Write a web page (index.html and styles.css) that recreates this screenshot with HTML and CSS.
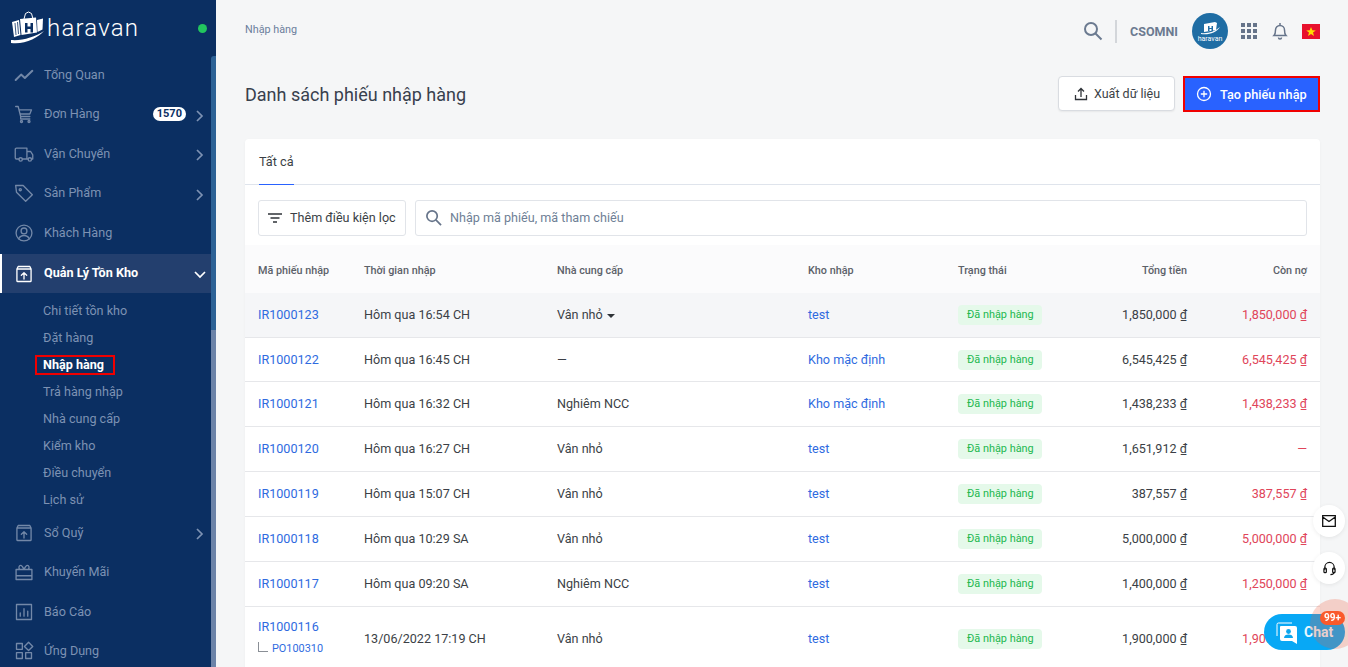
FILE: index.html
```html
<!DOCTYPE html>
<html lang="vi">
<head>
<meta charset="utf-8">
<title>Nhập hàng</title>
<link rel="stylesheet" href="styles.css">
</head>
<body>
<div class="app">
  <aside class="sidebar">
    <div class="brand">
      <svg class="brand-mark" viewBox="0 0 36 34" width="36" height="34">
        <path d="M14 8l1.500-5.500 3-1.500 3 1.500L23 8" fill="none" stroke="#fff" stroke-width="1"/>
        <path d="M2 11l7-2 1.500 15-6.500 2z" fill="#fff"/>
        <path d="M10 8l16-1.500 1 15-15.500 2.500z" fill="#fff"/>
        <path d="M27 9l6-1.500-.5 11-5 2.500z" fill="#fff"/>
        <path d="M15 12h2.500v3.500h3V12H23v9.500h-2.500v-3.500h-3v3.500H15z" fill="#0b2f62"/>
        <path d="M1 29c11 1 24-3 33-9-6 7-20 14-33 12z" fill="#fff"/>
        <path d="M5 12l1 12M7.500 11l1 12" stroke="#0b2f62" stroke-width=".8"/>
      </svg>
      <span class="brand-name">haravan</span>
      <span class="status-dot"></span>
    </div>
    <nav class="menu">
      <a class="menu-item"><svg class="mi" viewBox="0 0 24 24"><path class="thick" d="M2 18l6.500-6.500 4.500 4L22 7" /></svg><span class="ml">Tổng Quan</span></a>
      <a class="menu-item"><svg class="mi" viewBox="0 0 24 24"><path d="M2 3h3l3 12h11M7 7h14l-2 5H8M8 15v3h11"/><circle cx="9" cy="21" r="1.200"/><circle cx="18" cy="21" r="1.200"/></svg><span class="ml">Đơn Hàng</span><span class="count">1570</span><svg class="chev" viewBox="0 0 10 14"><path d="M2 2l5 5-5 5"/></svg></a>
      <a class="menu-item"><svg class="mi" viewBox="0 0 24 24"><path d="M6 18H3a1.500 1.500 0 0 1-1.500-1.500v-10A1.500 1.500 0 0 1 3 5h12.500v13H10M15.500 9H20l2.500 4v5H21M15.500 18H17"/><circle cx="8" cy="18.500" r="2"/><circle cx="19" cy="18.500" r="2"/></svg><span class="ml">Vận Chuyển</span><svg class="chev" viewBox="0 0 10 14"><path d="M2 2l5 5-5 5"/></svg></a>
      <a class="menu-item"><svg class="mi" viewBox="0 0 24 24"><path d="M2 3h9l11 11-8 8L3 11z"/><circle cx="7.500" cy="8" r="1.300"/></svg><span class="ml">Sản Phẩm</span><svg class="chev" viewBox="0 0 10 14"><path d="M2 2l5 5-5 5"/></svg></a>
      <a class="menu-item"><svg class="mi" viewBox="0 0 24 24"><circle cx="12" cy="12" r="9.500"/><circle cx="12" cy="9.500" r="3.500"/><path d="M5.500 19c1.500-3 4-4 6.500-4s5 1 6.500 4"/></svg><span class="ml">Khách Hàng</span></a>
      <a class="menu-item active"><svg class="mi" viewBox="0 0 24 24"><path d="M3.500 6V20a1 1 0 0 0 1 1h15a1 1 0 0 0 1-1V6M3.500 6l1.500-3h14l1.500 3zM12 18v-7M8.800 13.500L12 10.500l3.200 3"/></svg><span class="ml">Quản Lý Tồn Kho</span><svg class="chev open" viewBox="0 0 14 10"><path d="M2 2l5 5 5-5"/></svg></a>
      <div class="submenu">
        <a class="sub-item">Chi tiết tồn kho</a>
        <a class="sub-item">Đặt hàng</a>
        <a class="sub-item current"><span class="marked">Nhập hàng</span></a>
        <a class="sub-item">Trả hàng nhập</a>
        <a class="sub-item">Nhà cung cấp</a>
        <a class="sub-item">Kiểm kho</a>
        <a class="sub-item">Điều chuyển</a>
        <a class="sub-item">Lịch sử</a>
      </div>
      <a class="menu-item"><svg class="mi" viewBox="0 0 24 24"><path d="M3.500 6V20a1 1 0 0 0 1 1h15a1 1 0 0 0 1-1V6M3.500 6l1.500-3h14l1.500 3zM12 18v-7M8.800 13.500L12 10.500l3.200 3"/></svg><span class="ml">Sổ Quỹ</span><svg class="chev" viewBox="0 0 10 14"><path d="M2 2l5 5-5 5"/></svg></a>
      <a class="menu-item"><svg class="mi" viewBox="0 0 24 24"><path d="M2.500 9h19v12h-19zM2.500 16.500h19M7 9c-2-2-1-5 1-5s3 3 4 5c1-2 2-5 4-5s3 3 1 5"/></svg><span class="ml">Khuyến Mãi</span></a>
      <a class="menu-item"><svg class="mi" viewBox="0 0 24 24"><path d="M3 3h18v18H3zM7.500 17v-4M12 17V8M16.500 17v-6"/></svg><span class="ml">Báo Cáo</span></a>
      <a class="menu-item"><svg class="mi" viewBox="0 0 24 24"><path d="M3 3h7v7H3zM3 14h7v7H3zM14 14h7v7h-7zM17.500 1.500l5 5-5 5-5-5z"/></svg><span class="ml">Ứng Dụng</span></a>
    </nav>
    <div class="rail"><div class="rail-thumb"></div></div>
  </aside>

  <main class="main">
    <header class="topbar">
      <span class="crumb">Nhập hàng</span>
      <div class="top-actions">
        <svg class="top-search" viewBox="0 0 20 20" width="20" height="20"><circle cx="8" cy="8" r="6"/><path d="M12.500 12.500L18.500 18.500"/></svg>
        <span class="divider"></span>
        <span class="org">CSOMNI</span>
        <span class="avatar">
          <svg viewBox="0 0 36 36" width="36" height="36"><path d="M12 11l11-2 2 1-1 7-12 2z" fill="#fff"/><path d="M16 13h1.500v2h2v-2H21v5h-1.500v-2h-2v2H16z" fill="#1f6da4"/><path d="M9 20c6 1 13-1 19-6-4 6-11 8-19 7z" fill="#fff"/><text x="18" y="28" class="avatar-text">haravan</text></svg>
        </span>
        <svg class="apps" viewBox="0 0 16 16" width="16" height="16"><path d="M0 0h4v4H0zM6 0h4v4H6zM12 0h4v4h-4zM0 6h4v4H0zM6 6h4v4H6zM12 6h4v4h-4zM0 12h4v4H0zM6 12h4v4H6zM12 12h4v4h-4z"/></svg>
        <svg class="bell" viewBox="0 0 16 18" width="16" height="18"><path d="M2 13.500c1-1 1.500-2 1.500-5.500a4.500 4.500 0 0 1 9 0c0 3.500.5 4.500 1.500 5.500zM8 1v2M6.500 15.500a1.500 1.500 0 0 0 3 0"/></svg>
        <svg class="flag" viewBox="0 0 18 15" width="18" height="15"><path d="M0 0h18v15H0z" fill="#e8112d"/><path d="M9 3l1.300 3.300 3.500.1-2.800 2.100 1 3.400L9 9.900 6 11.900l1-3.400-2.800-2.100 3.500-.1z" fill="#ffde00"/></svg>
      </div>
    </header>

    <div class="page-head">
      <h1 class="page-title">Danh sách phiếu nhập hàng</h1>
      <div class="page-actions">
        <button class="btn"><svg class="btn-icon" viewBox="0 0 14 14" width="14" height="14"><path d="M1.500 8v4.500h11V8M7 10V2M4 4.500L7 1.500l3 3"/></svg>Xuất dữ liệu</button>
        <button class="btn-primary"><svg class="plus-icon" viewBox="0 0 16 16" width="16" height="16"><circle cx="8" cy="8" r="6.500"/><path d="M8 4.800v6.400M4.800 8h6.400"/></svg>Tạo phiếu nhập</button>
      </div>
    </div>

    <section class="card">
      <div class="tabs"><span class="tab">Tất cả</span></div>
      <div class="filters">
        <button class="filter-btn"><svg class="filter-icon" viewBox="0 0 14 10" width="14" height="10"><path d="M0 1h14M2.500 5h9M5 9h4"/></svg>Thêm điều kiện lọc</button>
        <label class="search"><svg class="search-icon" viewBox="0 0 18 18" width="17" height="17"><circle cx="7.500" cy="7.500" r="5.500"/><path d="M11.500 11.500L17 17"/></svg><span class="placeholder">Nhập mã phiếu, mã tham chiếu</span></label>
      </div>
      <table class="grid">
        <colgroup><col class="c1"><col class="c2"><col class="c3"><col class="c4"><col class="c5"><col class="c6"><col class="c7"></colgroup>
        <thead>
          <tr><th>Mã phiếu nhập</th><th>Thời gian nhập</th><th>Nhà cung cấp</th><th>Kho nhập</th><th>Trạng thái</th><th class="r">Tổng tiền</th><th class="r">Còn nợ</th></tr>
        </thead>
        <tbody>
          <tr class="hover"><td class="link">IR1000123</td><td>Hôm qua 16:54 CH</td><td>Vân nhỏ <span class="caret"></span></td><td class="link">test</td><td><span class="tag">Đã nhập hàng</span></td><td class="r">1,850,000 ₫</td><td class="r debt">1,850,000 ₫</td></tr>
          <tr class="short"><td class="link">IR1000122</td><td>Hôm qua 16:45 CH</td><td>—</td><td class="link">Kho mặc định</td><td><span class="tag">Đã nhập hàng</span></td><td class="r">6,545,425 ₫</td><td class="r debt">6,545,425 ₫</td></tr>
          <tr><td class="link">IR1000121</td><td>Hôm qua 16:32 CH</td><td>Nghiêm NCC</td><td class="link">Kho mặc định</td><td><span class="tag">Đã nhập hàng</span></td><td class="r">1,438,233 ₫</td><td class="r debt">1,438,233 ₫</td></tr>
          <tr><td class="link">IR1000120</td><td>Hôm qua 16:27 CH</td><td>Vân nhỏ</td><td class="link">test</td><td><span class="tag">Đã nhập hàng</span></td><td class="r">1,651,912 ₫</td><td class="r debt">—</td></tr>
          <tr><td class="link">IR1000119</td><td>Hôm qua 15:07 CH</td><td>Vân nhỏ</td><td class="link">test</td><td><span class="tag">Đã nhập hàng</span></td><td class="r">387,557 ₫</td><td class="r debt">387,557 ₫</td></tr>
          <tr><td class="link">IR1000118</td><td>Hôm qua 10:29 SA</td><td>Vân nhỏ</td><td class="link">test</td><td><span class="tag">Đã nhập hàng</span></td><td class="r">5,000,000 ₫</td><td class="r debt">5,000,000 ₫</td></tr>
          <tr><td class="link">IR1000117</td><td>Hôm qua 09:20 SA</td><td>Nghiêm NCC</td><td class="link">test</td><td><span class="tag">Đã nhập hàng</span></td><td class="r">1,400,000 ₫</td><td class="r debt">1,250,000 ₫</td></tr>
          <tr class="tall"><td class="link stacked"><div>IR1000116</div><div class="ref"><span class="elbow"></span>PO100310</div></td><td>13/06/2022 17:19 CH</td><td>Vân nhỏ</td><td class="link">test</td><td><span class="tag">Đã nhập hàng</span></td><td class="r">1,900,000 ₫</td><td class="r debt">1,900,000 ₫</td></tr>
        </tbody>
      </table>
    </section>
  </main>
</div>

<div class="float-btn mail"><svg viewBox="0 0 14 12" width="14" height="12"><path d="M.7.700h12.600v10.600H.7zM.7 2l6.300 4.500L13.300 2"/></svg></div>
<div class="float-btn support"><svg viewBox="0 0 14 15" width="13" height="15"><path d="M2 9V6a5 5 0 0 1 10 0v3M12 11c0 2-2 3-4 3"/><rect x="1" y="7" width="2.600" height="5" rx="1"/><rect x="10.400" y="7" width="2.600" height="5" rx="1"/></svg></div>
<div class="chat">
  <svg class="chat-icon" viewBox="0 0 22 23" width="22" height="23"><path d="M1 14V2.500A1.500 1.500 0 0 1 2.500 1H16" fill="none" stroke="#fff" stroke-width="1"/><path d="M4 5a1 1 0 0 1 1-1h14a2 2 0 0 1 2 2v16l-5-3H6a2 2 0 0 1-2-2z" fill="#fff"/><circle cx="12.500" cy="9.500" r="2.400" fill="#0ca6ee"/><path d="M8 16c0-2.500 2-3.500 4.500-3.500S17 13.500 17 16z" fill="#0ca6ee"/></svg>
  <span class="chat-label">Chat</span>
</div>
<div class="chat-halo"></div>
<span class="chat-badge">99+</span>
</body>
</html>
```

FILE: styles.css
```css
* { box-sizing: border-box; }
html, body { margin: 0; height: 100%; overflow: hidden; }
body { font-family: Roboto, "Liberation Sans", sans-serif; font-size: 12.600px; color: #3b3f46; background: #f5f6f7; }
.app { display: flex; height: 667px; }

.sidebar { position: relative; width: 216px; flex: none; background: #0b2f62; color: #7d92b3; overflow: hidden; }
.brand { display: flex; align-items: center; height: 55px; padding: 12px 10px 0 10px; }
.brand-mark { flex: none; margin-top: -12px; margin-right: 1px; }
.brand-name { color: #fff; font-size: 24px; font-weight: 300; letter-spacing: 1.200px; margin-top: -11px; line-height: 30px; }
.status-dot { width: 9px; height: 9px; border-radius: 50%; background: #22c55e; margin-left: auto; margin-right: -1px; margin-top: -11px; }
.menu { display: block; width: 211px; }
.menu-item { display: flex; align-items: center; height: 39.500px; padding-left: 14px; padding-right: 6px; font-size: 12.600px; }
.mi { width: 20px; height: 20px; flex: none; fill: none; stroke: #7388a8; stroke-width: 1.600; stroke-linejoin: round; stroke-linecap: round; margin-right: 10px; }
.thick { stroke-width: 2.400; }
.ml { flex: 1; padding-bottom: 1px; }
.count { background: #fff; color: #0b2f62; font-size: 11px; font-weight: 700; line-height: 14px; border-radius: 8px; padding: 0 4px; margin-right: 9px; }
.chev { width: 10px; height: 14px; fill: none; stroke: #7d92b3; stroke-width: 1.700; flex: none; margin-top: 3px; }
.chev.open { width: 14px; height: 10px; stroke: #fff; margin-right: -2px; margin-top: 2px; }
.menu-item.active { background: #233f6e; color: #fff; font-weight: 700; border-left: 2px solid #fff; padding-left: 12px; height: 39px; margin-top: 1.500px; }
.menu-item.active .mi { stroke: #fff; }
.menu-item.active .ml { padding-bottom: 3px; }
.submenu { padding: 3.500px 0 .5px; }
.sub-item { display: flex; align-items: center; height: 27px; padding-left: 43px; font-size: 12.600px; }
.sub-item.current { color: #fff; font-weight: 700; }
.marked { position: relative; }
.marked::after { content: ""; position: absolute; left: -8px; right: -11px; top: -2px; bottom: -3px; border: 2px solid #f00000; }
.rail { position: absolute; top: 0; bottom: 0; right: 0; width: 5px; }
.rail-thumb { position: absolute; top: 56px; bottom: 0; left: 0; right: 0; background: linear-gradient(#2d6296 0 274px, #6c83a8 274px); border-radius: 3px 0 0 0; }

.main { flex: 1; min-width: 0; padding: 0 28px 0 29px; overflow: hidden; }
.topbar { display: flex; align-items: center; justify-content: space-between; height: 60px; }
.crumb { font-size: 10.800px; color: #6b7e9c; margin-top: -2px; }
.top-actions { display: flex; align-items: center; margin-top: 2px; }
.top-search { fill: none; stroke: #6b7a90; stroke-width: 2; margin-right: 12px; }
.divider { width: 2px; height: 23px; background: #d3d6da; margin-right: 13px; }
.org { font-size: 12.500px; font-weight: 700; color: #6b7a90; margin-right: 14px; }
.avatar { width: 36px; height: 36px; border-radius: 50%; background: #1f6da4; display: block; overflow: hidden; margin-right: 13px; }
.avatar-text { font-family: Roboto, sans-serif; font-size: 7px; fill: #fff; text-anchor: middle; }
.apps { fill: #66748a; margin-right: 15px; }
.bell { fill: none; stroke: #66748a; stroke-width: 1.500; margin-right: 14px; }
.flag { display: block; }

.page-head { display: flex; align-items: center; justify-content: space-between; height: 36px; margin-top: 16px; }
.page-title { margin: 0; font-size: 18px; font-weight: 400; color: #38404d; line-height: 36px; padding-top: 1px; }
.page-actions { display: flex; gap: 8px; }
.btn { display: flex; align-items: center; height: 35px; width: 117px; padding: 0 0 0 15px; background: #fff; border: 1px solid #d9dce1; border-radius: 4px; font: 400 12.500px Roboto, sans-serif; color: #3b3f46; box-shadow: 0 1px 2px rgba(0,0,0,.06); }
.btn-icon { fill: none; stroke: #2f3338; stroke-width: 1.300; margin-right: 6px; }
.btn-primary { display: flex; align-items: center; height: 36px; width: 137px; padding: 0 0 0 11px; background: #2962ff; border: 2px solid #f00000; font: 500 12.700px Roboto, sans-serif; color: #fff; }
.plus-icon { fill: none; stroke: #fff; stroke-width: 1.300; margin-right: 8px; }

.card { margin-top: 27px; background: #fff; border-radius: 4px 4px 0 0; box-shadow: 0 1px 3px rgba(0,0,0,.04); }
.tabs { height: 46px; border-bottom: 1px solid #dfe4ec; padding-left: 14px; }
.tab { display: inline-block; height: 46px; line-height: 45px; font-size: 12.700px; color: #3b3f46; border-bottom: 1px solid #2962ff; }
.filters { display: flex; gap: 9px; padding: 15px 13px 9px; height: 60px; }
.filter-btn { display: flex; align-items: center; flex: none; width: 148px; height: 36px; padding: 0 0 1px 9px; background: #fff; border: 1px solid #e1e4e9; border-radius: 3px; font: 400 12.600px Roboto, sans-serif; color: #3b3f46; }
.filter-icon { fill: none; stroke: #2f3338; stroke-width: 1.300; margin-right: 8px; }
.search { flex: 1; display: flex; align-items: center; height: 36px; padding: 0 0 1px 9px; border: 1px solid #e1e4e9; border-radius: 3px; background: #fff; }
.search-icon { fill: none; stroke: #66748a; stroke-width: 1.800; margin-right: 8px; }
.placeholder { color: #6f7f96; font-size: 12.600px; }

.grid { width: 1075px; table-layout: fixed; border-collapse: collapse; font-size: 12.600px; }
.c1 { width: 106px; } .c2 { width: 193px; } .c3 { width: 251px; } .c4 { width: 150px; } .c5 { width: 145px; } .c6 { width: 110px; } .c7 { width: 120px; }
.grid th { height: 48px; text-align: left; font-size: 10.800px; font-weight: 500; color: #5c6169; padding: 2px 0 0 13px; background: #fbfbfc; white-space: nowrap; }
.grid td { height: 45px; padding: 0 0 0 13px; border-bottom: 1px solid #e6e7ea; white-space: nowrap; color: #3b3f46; }
.grid th.r, .grid td.r { text-align: right; padding: 0 13px 0 0; }
.grid th.r { padding-top: 2px; }
.grid td.link { color: #2f6bdf; }
.grid td.debt { color: #e0455a; }
.grid td.stacked { padding-bottom: 2px; }
.hover td { background: #f5f6f8; height: 44px; }
.grid .short td { height: 44px; }
.grid .tall td { height: 64px; }
.caret { display: inline-block; width: 0; height: 0; border: 4.500px solid transparent; border-top: 4.500px solid #2f3338; border-bottom: 0; margin-left: 1px; vertical-align: 1.500px; }
.tag { display: inline-block; vertical-align: middle; background: #e5f9ea; color: #22b84f; font-size: 10.900px; line-height: 20px; padding: 0 8px 0 9px; border-radius: 4px; margin-top: 1px; }
.ref { font-size: 10.900px; margin-top: 8px; display: flex; align-items: flex-end; line-height: 12px; }
.elbow { width: 10px; height: 10px; border-left: 1px solid #8a8f96; border-bottom: 1px solid #8a8f96; margin-right: 4px; margin-bottom: 3px; }

.float-btn { position: fixed; right: 3px; width: 32px; height: 32px; border-radius: 50%; background: #fff; display: flex; align-items: center; justify-content: center; box-shadow: 0 1px 4px rgba(0,0,0,.08); }
.float-btn svg { fill: none; stroke: #111; stroke-width: 1.300; }
.mail { top: 505px; }
.support { top: 552px; }
.chat { position: fixed; left: 1264px; top: 614px; width: 81px; height: 36px; border-radius: 18px; background: #08a8f5; display: flex; align-items: center; padding-left: 12px; }
.chat-icon { flex: none; margin-right: 6px; margin-top: 2px; }
.chat-label { color: #fff; font-size: 14px; font-weight: 700; opacity: .9; }
.chat-halo { position: fixed; left: 1310px; top: 599px; width: 50px; height: 50px; border-radius: 50%; background: rgba(240,90,60,.25); }
.chat-badge { position: fixed; left: 1320px; top: 611px; width: 25px; height: 14px; border-radius: 8px; background: #fa5a2c; color: #fff; font-size: 10px; font-weight: 700; line-height: 14px; text-align: center; }
```
